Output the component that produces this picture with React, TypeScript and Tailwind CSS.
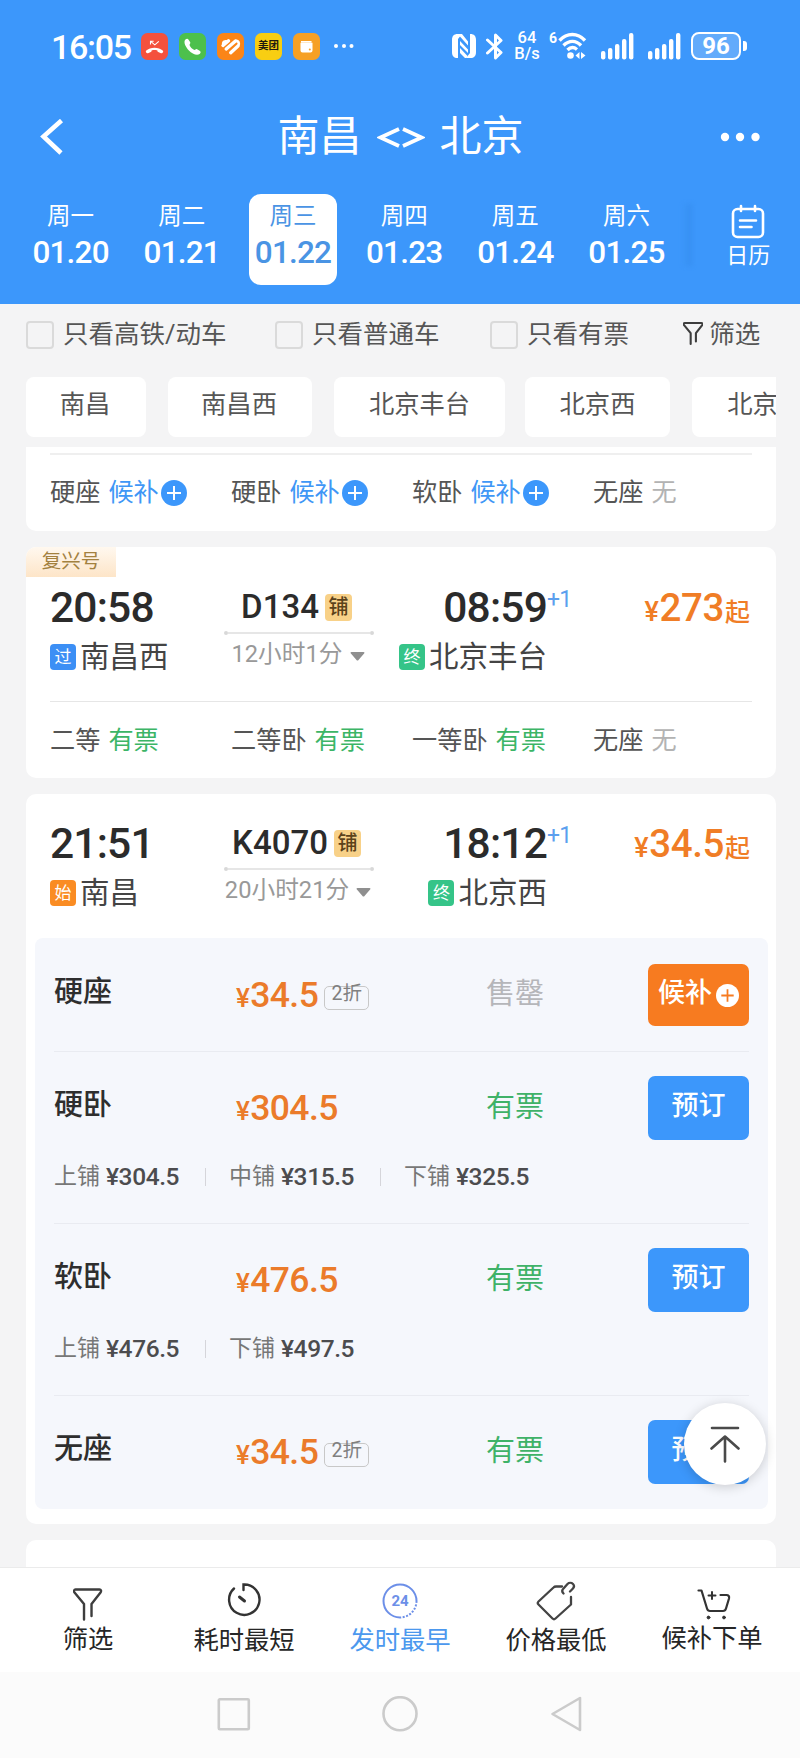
import type { ReactNode } from 'react';
import clsx from 'clsx';

const days = [
  { week: '周一', date: '01.20' },
  { week: '周二', date: '01.21' },
  { week: '周三', date: '01.22', active: true },
  { week: '周四', date: '01.23' },
  { week: '周五', date: '01.24' },
  { week: '周六', date: '01.25' },
];

interface Seat {
  name: string;
  status: 'waitlist' | 'available' | 'none';
}

interface Train {
  depart: string;
  arrive: string;
  from: string;
  to: string;
  fromTag: '过' | '始';
  code: string;
  duration: string;
  price: string;
}

interface SeatOffer {
  name: string;
  price: string;
  discount?: string;
  soldOut?: boolean;
  berths?: { name: string; price: string }[];
}

const d134: Train = {
  depart: '20:58', arrive: '08:59', from: '南昌西', to: '北京丰台',
  fromTag: '过', code: 'D134', duration: '12小时1分', price: '273',
};

const k4070: Train = {
  depart: '21:51', arrive: '18:12', from: '南昌', to: '北京西',
  fromTag: '始', code: 'K4070', duration: '20小时21分', price: '34.5',
};

const offers: SeatOffer[] = [
  { name: '硬座', price: '34.5', discount: '2折', soldOut: true },
  {
    name: '硬卧', price: '304.5',
    berths: [
      { name: '上铺', price: '¥304.5' },
      { name: '中铺', price: '¥315.5' },
      { name: '下铺', price: '¥325.5' },
    ],
  },
  {
    name: '软卧', price: '476.5',
    berths: [
      { name: '上铺', price: '¥476.5' },
      { name: '下铺', price: '¥497.5' },
    ],
  },
  { name: '无座', price: '34.5', discount: '2折' },
];

function Signal() {
  return (
    <svg width="33" height="27" viewBox="0 0 33 27" fill="#fff">
      <rect x="0" y="18" width="4.4" height="8.5" rx="2" />
      <rect x="7" y="15" width="4.4" height="11.5" rx="2" />
      <rect x="14" y="11" width="4.4" height="15.5" rx="2" />
      <rect x="21" y="6" width="4.4" height="20.5" rx="2" />
      <rect x="28" y="0" width="4.4" height="26.5" rx="2" />
    </svg>
  );
}

function StatusBar() {
  return (
    <div className="flex h-[92px] items-center pl-[51px] pr-[53px] text-white">
      <span className="w-[90px] pt-[2px] text-[34px] leading-[40px] font-medium tracking-[-1.3px]">16:05</span>
      <div className="flex items-center gap-[11px]">
        {/* Missed call */}
        <svg width="27" height="27" viewBox="0 0 27 27">
          <rect width="27" height="27" rx="6.5" fill="#f4513d" />
          <path d="M5 17.800c4.500-4.200 12.500-4.200 17 0 .7 1-.6 3-2 2.400l-2.800-1.100c-.9-.4-.6-1.300-.8-1.700-1.800-.5-4-.5-5.800 0-.2.4.1 1.300-.8 1.700L7 20.200c-1.400.6-2.700-1.400-2-2.400z" fill="#fff" />
          <path d="M9.500 11.500V8.200h3.200M10 8.600l3.800 3.200 4-3.500" stroke="#fff" strokeWidth="1.100" fill="none" />
        </svg>
        {/* Phone */}
        <svg width="27" height="27" viewBox="0 0 27 27">
          <rect width="27" height="27" rx="6.5" fill="#4dc04c" />
          <path d="M6.200 6.800c1-1.200 2.600-1.300 3.200-.4l1.800 2.800c.6 1-.8 2-.7 2.900.7 2 2.700 4.200 4.800 4.900 1 .1 1.800-1.300 2.800-.8l2.900 1.700c1 .7.700 2.200-.4 3.100-2.700 2-7.600-.3-10.700-3.500S4.200 9.400 6.200 6.800z" fill="#fff" />
        </svg>
        {/* Striped heart */}
        <svg width="27" height="27" viewBox="0 0 27 27">
          <rect width="27" height="27" rx="6.500" fill="#fb8517" />
          <path d="M6 12.500l5.500-4.700M9.200 16l9.300-8M13.700 19.700l7.300-6.700" stroke="#fff" strokeWidth="3.400" strokeLinecap="round" />
          <path d="M5.500 12.500c-2-3 1-6.500 4.500-5.300l2.500 1-6 5.300z" fill="#fff" />
          <path d="M18.500 8c2.600-.6 4.600 2.300 2.500 5" stroke="#fff" strokeWidth="2.600" fill="none" />
        </svg>
        <span className="flex h-[27px] w-[27px] items-center justify-center rounded-[6.5px] bg-[#f8ce12] text-[10.500px] leading-[14px] font-bold whitespace-nowrap text-[#1f1a10]">美团</span>
        {/* Wallet */}
        <svg width="27" height="27" viewBox="0 0 27 27">
          <rect width="27" height="27" rx="6.5" fill="#f6a024" />
          <path d="M8 8h10.500v1.500H8zM7.500 9.800h12v7.700a2 2 0 0 1-2 2h-8a2 2 0 0 1-2-2z" fill="#fff" />
          <circle cx="16.800" cy="16.500" r="1" fill="#f6a024" />
        </svg>
      </div>
      <svg className="ml-[14px]" width="20" height="6" viewBox="0 0 20 6" fill="#fff">
        <circle cx="2" cy="3" r="2" /><circle cx="10" cy="3" r="2" /><circle cx="17.500" cy="3" r="2" />
      </svg>
      <div className="ml-auto flex items-center">
        {/* NFC */}
        <svg width="24" height="26" viewBox="0 0 24 26">
          <path d="M5.500 1C2 1 0 3 0 7v12c0 4 2 6 5.500 6H6V6L10 1z" fill="#fff" />
          <path d="M18.500 25c3.500 0 5.500-2 5.500-6V7c0-4-2-6-5.500-6H18v19l-4 5z" fill="#fff" />
          <path d="M7.500 1h2.500l6 7.500v4L7.500 3zM8 8l8 8.500v3.500L8 12zM8 15l7.500 8-1 2H13l-5-5z" fill="#fff" />
        </svg>
        {/* Bluetooth */}
        <svg className="ml-[10px]" width="17" height="27" viewBox="0 0 17 27" fill="none" stroke="#fff" strokeWidth="3" strokeLinejoin="round" strokeLinecap="round">
          <path d="M1.500 7l13.500 12.500-5.500 5.500V2l5.500 5.500L1.500 20" />
        </svg>
        <div className="ml-[8px] flex w-[32px] flex-col items-center text-[16.500px] leading-[16.500px] font-medium">
          <span>64</span>
          <span>B/s</span>
        </div>
        <span className="ml-[6px] -mt-[16px] w-[9px] text-[14px] leading-[14px] font-bold">6</span>
        {/* Wifi */}
        <svg width="29" height="28" viewBox="0 0 29 28" fill="none" stroke="#fff" strokeWidth="3.400">
          <path d="M1.500 8.500c7.500-8 18-8 25.500 0M5.500 13.500c5.500-5.500 12.500-5.500 17.500 0M9.500 18c3-3 6.500-3 9.500-.5" />
          <circle cx="12.500" cy="23.500" r="3.300" fill="#fff" stroke="none" />
          <path d="M21.500 20v7l-4-3.500zM23 20v7l4.500-3.500z" fill="#fff" stroke="none" />
        </svg>
        <span className="ml-[14px]"><Signal /></span>
        <span className="ml-[14px]"><Signal /></span>
        <div className="ml-[10px] flex h-[28px] w-[50px] items-center justify-center rounded-[8px] border-2 border-white bg-white/20 text-[24px] leading-[28px] font-bold">96</div>
        <div className="ml-[2px] h-[10px] w-[4px] rounded-r-[3px] bg-white" />
      </div>
    </div>
  );
}

function Header() {
  return (
    <header className="h-[304px] bg-[#3c97fb] text-white">
      <StatusBar />
      <div className="flex h-[88px] items-center justify-between px-[40px] pt-[2px]">
        <svg width="41" height="36" viewBox="0 0 41 36" fill="none" stroke="#fff" strokeWidth="4.600">
          <path d="M21.500 1.500L3.500 17.500l17.500 16.500" />
        </svg>
        <h1 className="flex items-center text-[42px] leading-[50px]">
          <span>南昌</span>
          <svg className="mx-[15px] mt-[1px]" width="48" height="22" viewBox="0 0 48 22" fill="none" stroke="#fff" strokeWidth="3.800">
            <path d="M22 2L3.500 10.500l18.500 8.500M26 2l18.500 8.500L26 19" />
          </svg>
          <span>北京</span>
        </h1>
        <svg width="40" height="10" viewBox="0 0 40 10" fill="#fff">
          <circle cx="5" cy="5" r="4.200" /><circle cx="20" cy="5" r="4.200" /><circle cx="35.500" cy="5" r="4.200" />
        </svg>
      </div>
      <div className="flex pt-[14px] pl-[15px]">
        {days.map((day) => (
          <div key={day.date} className="flex w-[111.200px] justify-center">
            <div
              className={clsx(
                'flex h-[91px] w-[88px] flex-col items-center rounded-[12px] pt-[7px]',
                day.active && 'bg-white text-[#4a94e4]'
              )}
            >
              <span className="text-[23.500px] leading-[30px]">{day.week}</span>
              <span className="mt-[4px] text-[31.500px] leading-[36px] font-medium tracking-[-0.8px]">{day.date}</span>
            </div>
          </div>
        ))}
        <div className="mt-[10px] h-[62px] w-[10px] bg-gradient-to-r from-transparent to-[#368fF1] blur-[2px]" />
        <div className="ml-[34px] flex flex-col items-center pt-[10px]">
          <svg width="34" height="36" viewBox="0 0 34 36" fill="none" stroke="#fff" strokeWidth="2.600" strokeLinecap="round">
            <rect x="2" y="5" width="30" height="28" rx="4.500" />
            <path d="M10 2v5M24 2v5M9 16.500h16M9 23h11.500" />
          </svg>
          <span className="mt-[2px] text-[22px] leading-[28px]">日历</span>
        </div>
      </div>
    </header>
  );
}

function Check({ label, className }: { label: string; className?: string }) {
  return (
    <label className={clsx('flex items-center gap-[9px]', className)}>
      <span className="mt-[2px] h-[28px] w-[28px] rounded-[4px] border-2 border-[#dadada]" />
      <span>{label}</span>
    </label>
  );
}

function FunnelIcon({ size, width }: { size: number; width: number }) {
  return (
    <svg width={size * 0.88} height={size} viewBox="0 0 29 33" fill="none" stroke="#3d3d3d" strokeWidth={width} strokeLinecap="round" strokeLinejoin="round">
      <path d="M11 31.500V16L1.500 4.500c-1-1.500-.5-3 1-3h24c1.500 0 2 1.500 1 3L18.500 16v12" />
    </svg>
  );
}

function Filters() {
  return (
    <div className="flex h-[59px] items-center pl-[26px] text-[25.500px] leading-[34px] text-[#565656]">
      <Check label="只看高铁/动车" className="w-[249px]" />
      <Check label="只看普通车" className="w-[215px]" />
      <Check label="只看有票" className="w-[193px]" />
      <FunnelIcon size={23} width={3} />
      <span className="ml-[6px]">筛选</span>
    </div>
  );
}

function Stations() {
  const chip = 'flex h-[60px] shrink-0 items-center justify-center rounded-[8px] bg-white pb-[5px]';
  return (
    <div className="mx-[26px] mr-[24px] mt-[14px] flex overflow-hidden text-[25.300px] leading-[34px] text-[#565656]">
      <span className={clsx(chip, 'w-[120px] pr-[2px]')}>南昌</span>
      <span className={clsx(chip, 'ml-[22px] w-[144px] pr-[2px]')}>南昌西</span>
      <span className={clsx(chip, 'ml-[22px] w-[171px]')}>北京丰台</span>
      <span className={clsx(chip, 'ml-[20px] w-[145px]')}>北京西</span>
      <span className={clsx(chip, 'ml-[22px] w-[121px]')}>北京</span>
    </div>
  );
}

function PlusCircle({ size, bg, fg }: { size: number; bg: string; fg: string }) {
  return (
    <svg width={size} height={size} viewBox="0 0 26 26">
      <circle cx="13" cy="13" r="13" fill={bg} />
      <path d="M13 6v14M6 13h14" stroke={fg} strokeWidth="2" />
    </svg>
  );
}

function SeatSummary({ seats }: { seats: Seat[] }) {
  return (
    <div className="grid grid-cols-[181px_181px_181px_auto] text-[25.200px] leading-[34px] text-[#555]">
      {seats.map((seat) => (
        <div key={seat.name} className="flex items-center whitespace-nowrap">
          <span className="mr-[8px]">{seat.name}</span>
          {seat.status === 'waitlist' && (
            <>
              <span className="mr-[2px] text-[#3f97f6]">候补</span>
              <PlusCircle size={26} bg="#3c97fb" fg="#fff" />
            </>
          )}
          {seat.status === 'available' && <span className="text-[#3cb566]">有票</span>}
          {seat.status === 'none' && <span className="text-[#b3b3b3]">无</span>}
        </div>
      ))}
    </div>
  );
}

function StationTag({ children }: { children: '过' | '始' | '终' }) {
  return (
    <span
      className={clsx(
        'mr-[4px] flex h-[26px] w-[26px] items-center justify-center rounded-[4px] text-[17px] leading-[20px] text-white',
        children === '过' && 'bg-[#3c8ff5]',
        children === '始' && 'bg-[#fa8c23]',
        children === '终' && 'bg-[#35c488]'
      )}
    >
      {children}
    </span>
  );
}

function TrainHead({ train }: { train: Train }) {
  const time = 'text-[42.500px] leading-[50px] font-medium tracking-[-0.8px] text-[#2b2b2b]';
  const station = 'mt-[4px] flex h-[40px] items-center text-[29.500px] leading-[40px] text-[#444]';
  return (
    <div className="flex h-[96px] pl-[24px] pr-[26px]">
      <div className="w-[174px]">
        <div className={time}>{train.depart}</div>
        <div className={station}>
          <StationTag>{train.fromTag}</StationTag>
          {train.from}
        </div>
      </div>
      <div className="flex w-[150px] flex-col items-center">
        <div className="flex h-[48px] items-center pr-[5px] text-[33px] leading-[40px] font-medium text-[#2b2b2b]">
          <span>{train.code}</span>
          <span className="ml-[6px] flex h-[27px] w-[27px] items-center justify-center rounded-[4px] bg-[#f8d188] text-[20px] leading-[24px] font-medium text-[#5c421a]">铺</span>
        </div>
        <div className="flex w-full items-center">
          <span className="h-[4px] w-[4px] rounded-full bg-[#d8d8d8]" />
          <span className="h-[2px] flex-1 bg-[#e6e6e6]" />
          <span className="h-[4px] w-[4px] rounded-full bg-[#d8d8d8]" />
        </div>
        <div className="mt-[3px] flex items-center pr-[2px] text-[23.700px] leading-[32px] text-[#999]">
          {train.duration}
          <svg className="ml-[7px] mt-[4px]" width="15" height="9" viewBox="0 0 15 9" fill="#8f8f8f">
            <path d="M1.500 0h12c1 0 1.300.8.6 1.500L8.500 8c-.6.700-1.400.700-2 0L.9 1.500C.2.800.5 0 1.500 0z" />
          </svg>
        </div>
      </div>
      <div className="flex w-[173px] flex-col items-end">
        <div className={clsx(time, 'relative')}>
          {train.arrive}
          <span className="absolute top-[5px] left-full text-[23px] leading-[24px] font-normal text-[#5c9fee]">+1</span>
        </div>
        <div className={station}>
          <StationTag>终</StationTag>
          {train.to}
        </div>
      </div>
      <div className="ml-auto flex items-baseline text-[38.500px] leading-[50px] font-medium tracking-[-0.4px] text-[#f07d26]">
        <span className="mr-[1px] text-[27px]">¥</span>
        <span>{train.price}</span>
        <span className="ml-[1px] text-[25px] tracking-normal">起</span>
      </div>
    </div>
  );
}

function BookButton({ waitlist }: { waitlist?: boolean }) {
  if (waitlist) {
    return (
      <button className="mt-[1px] flex h-[62px] w-[101px] items-center justify-center rounded-[7px] bg-[#f77b20] text-[27px] leading-[36px] font-medium text-white">
        <span className="-mt-[5px] mr-[4px]">候补</span>
        <PlusCircle size={23} bg="#fff" fg="#f77b20" />
      </button>
    );
  }
  return (
    <button className="h-[64px] w-[101px] rounded-[7px] bg-[#3c97fb] pb-[5px] text-[27px] leading-[36px] font-medium text-white">预订</button>
  );
}

function OfferRow({ offer }: { offer: SeatOffer }) {
  return (
    <div className={clsx('border-b border-[#e9ebf1] last:border-b-0', offer.berths ? 'h-[172px]' : 'h-[114px]')}>
      <div className={clsx('flex items-start', offer.soldOut ? 'pt-[25px]' : 'pt-[24px]')}>
        <span className="mt-[9px] w-[182px] text-[29px] leading-[40px] font-medium text-[#2e2e2e]">{offer.name}</span>
        <div className="mt-[11px] flex w-[250px] items-center">
          <div className="flex items-baseline text-[35.500px] leading-[42px] font-medium tracking-[-0.6px] text-[#eb7b2a]">
            <span className="mr-[1px] text-[26px]">¥</span>
            <span>{offer.price}</span>
          </div>
          {offer.discount && (
            <span className="mt-[2px] ml-[6px] h-[24px] w-[45px] rounded-[5px] border border-[#c8c8c8] text-center text-[19.500px] leading-[14px] text-[#808080]">{offer.discount}</span>
          )}
        </div>
        <span className={clsx('mt-[11px] text-[29px] leading-[40px]', offer.soldOut ? 'text-[#b5b6ba]' : 'text-[#3fb268]')}>
          {offer.soldOut ? '售罄' : '有票'}
        </span>
        <span className="ml-auto"><BookButton waitlist={offer.soldOut} /></span>
      </div>
      {offer.berths && (
        <div className="mt-[20px] flex items-center text-[23px] leading-[34px] text-[#777]">
          {offer.berths.map((berth, i) => (
            <div key={berth.name} className="flex items-center">
              {i > 0 && <span className="mr-[23px] h-[18px] w-px bg-[#d5d5da]" />}
              <span>{berth.name}</span>
              <span className="ml-[6px] w-[99px] text-[24.500px] font-medium tracking-[-0.4px] text-[#4c4c4e]">{berth.price}</span>
            </div>
          ))}
        </div>
      )}
    </div>
  );
}

function Tab({ icon, label, active, className }: { icon: ReactNode; label: string; active?: boolean; className?: string }) {
  return (
    <div className={clsx('flex w-[156px] flex-col items-center', active ? 'text-[#4c98ee]' : 'text-[#262626]')}>
      <div className="flex h-[42px] items-end justify-center">{icon}</div>
      <span className={clsx('text-[25.300px] leading-[32px]', className ?? 'mt-[6px]')}>{label}</span>
    </div>
  );
}

function TabBar() {
  return (
    <nav className="flex h-[105px] border-t border-[#ebebeb] bg-white pt-[9px] pl-[10px]">
      <Tab label="筛选" className="mt-[5px]" icon={<span className="-mb-[2px]"><FunnelIcon size={33} width={2.400} /></span>} />
      <Tab
        label="耗时最短"
        icon={
          <svg className="mb-[2px]" width="34" height="34" viewBox="0 0 34 34" fill="none" stroke="#333" strokeWidth="2.400" strokeLinecap="round">
            <path d="M16.500 7V1.500A15.200 15.200 0 1 1 7 5.500" />
            <path d="M12.500 14l5 4" strokeWidth="3" />
          </svg>
        }
      />
      <Tab
        label="发时最早"
        active
        icon={
          <span className="relative flex h-[36px] w-[36px] items-center justify-center text-[15px] leading-[16px] font-bold text-[#6c8fe8]">
            <svg className="absolute inset-0" width="36" height="36" viewBox="0 0 36 36" fill="none" stroke="#6c8fe8" strokeWidth="2">
              <path d="M18 34.500A16.500 16.500 0 1 1 34.500 18" />
              <path d="M34.500 18A16.500 16.500 0 0 1 18 34.500" strokeDasharray="2 1.500" />
            </svg>
            24
          </span>
        }
      />
      <Tab
        label="价格最低"
        icon={
          <svg className="-mb-[2px]" width="40" height="40" viewBox="0 0 40 40" fill="none" stroke="#444" strokeWidth="2.300" strokeLinecap="round" strokeLinejoin="round">
            <path d="M26 5.500h-6c-1 0-1.800.3-2.500 1L2.500 20.500c-1 1-1 2 0 3l14 14c1 1 2 1 3 0L35 23.500V16" />
            <path d="M27.500 12.500c-2-2-1.500-3.500 0-5l4-4.500c1.500-1.500 4-1.500 5.500 0s1 3.500-.5 5L34 10.500" />
          </svg>
        }
      />
      <Tab
        label="候补下单"
        className="mt-[4px]"
        icon={
          <svg className="-mb-[1px] ml-[4px]" width="34" height="31" viewBox="0 0 34 31" fill="none" stroke="#333" strokeWidth="2.200" strokeLinecap="round" strokeLinejoin="round">
            <path d="M1.500 1.500h3l5.500 18c.5 1.600 1.500 2.500 3 2.500h13c1.500 0 2.500-.8 3-2.500l3-10c.5-2-.5-3.500-2.500-3.500h-6" />
            <path d="M15 3v7M11.500 6.500h7" strokeWidth="2" />
            <circle cx="11.500" cy="28.500" r="1.400" fill="#333" strokeWidth="1" />
            <circle cx="27" cy="28.500" r="1.400" fill="#333" strokeWidth="1" />
          </svg>
        }
      />
    </nav>
  );
}

function SystemNav() {
  return (
    <div className="flex h-[86px] items-start bg-[#fbfbfb] pt-[24px] pl-[217px]">
      <svg width="366" height="36" viewBox="0 0 366 36" fill="none" stroke="#cbcbcb" strokeWidth="2.600" strokeLinejoin="round">
        <rect x="1.800" y="3.300" width="30" height="30" rx="1" />
        <circle cx="183" cy="17.700" r="16.500" />
        <path d="M335.500 18l27.500-16v32z" />
      </svg>
    </div>
  );
}

export default function App() {
  return (
    <div className="relative h-[1758px] w-[800px] overflow-hidden bg-[#f4f4f5] font-[Roboto,'Noto_Sans_CJK_SC',sans-serif]">
      <Header />
      <Filters />
      <Stations />

      <main className="mt-[10px] flex h-[1120px] flex-col gap-[16px] overflow-hidden pl-[26px] pr-[24px]">
        {/* Previous train, scrolled mostly out of view */}
        <section className="h-[84px] shrink-0 rounded-b-[10px] bg-white px-[24px] pt-[6px]">
          <div className="mb-[21px] h-[2px] bg-[#efefef]" />
          <SeatSummary
            seats={[
              { name: '硬座', status: 'waitlist' },
              { name: '硬卧', status: 'waitlist' },
              { name: '软卧', status: 'waitlist' },
              { name: '无座', status: 'none' },
            ]}
          />
        </section>

        <section className="h-[231px] shrink-0 overflow-hidden rounded-[10px] bg-white">
          <div className="flex h-[30px] w-[90px] items-center justify-center bg-gradient-to-b from-[#fff8ef] to-[#fde5c8] text-[19.500px] leading-[26px] text-[#a3813f]">复兴号</div>
          <div className="mt-[6px]"><TrainHead train={d134} /></div>
          <div className="mx-[24px] mt-[22px] mb-[22px] h-px bg-[#e6e6e6]" />
          <div className="px-[24px]">
            <SeatSummary
              seats={[
                { name: '二等', status: 'available' },
                { name: '二等卧', status: 'available' },
                { name: '一等卧', status: 'available' },
                { name: '无座', status: 'none' },
              ]}
            />
          </div>
        </section>

        <section className="h-[730px] shrink-0 rounded-[10px] bg-white pt-[25px]">
          <TrainHead train={k4070} />
          <div className="mx-[9px] mr-[8px] mt-[23px] h-[571px] rounded-[8px] bg-[#f5f7fc] px-[19px]">
            {offers.map((offer) => (
              <OfferRow key={offer.name} offer={offer} />
            ))}
          </div>
        </section>

        <section className="h-[60px] shrink-0 rounded-t-[10px] bg-white" />
      </main>

      <TabBar />
      <SystemNav />

      {/* Back to top */}
      <button className="absolute top-[1403px] left-[684px] flex h-[82px] w-[82px] items-center justify-center rounded-full bg-white shadow-[0_2px_12px_rgba(0,0,0,0.18)]">
        <svg width="30" height="37" viewBox="0 0 30 37" fill="none" stroke="#4a4a4a" strokeWidth="2.600" strokeLinecap="round" strokeLinejoin="round">
          <path d="M2 2h26M15 35.500V11.500M1.500 22.500L15 10.500l13.500 12" />
        </svg>
      </button>
    </div>
  );
}
